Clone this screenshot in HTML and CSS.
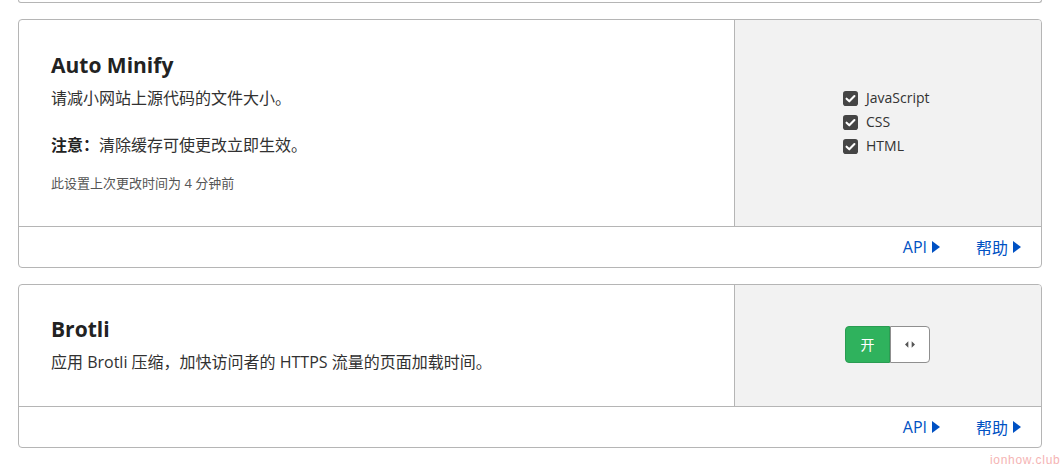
FILE: index.html
```html
<!DOCTYPE html>
<html lang="zh">
<head>
<meta charset="utf-8">
<link rel="stylesheet" href="styles.css">
</head>
<body>
<div class="page">
  <div class="card-tail"></div>

  <section class="card">
    <div class="card-main">
      <div class="card-text">
        <h2 class="title">Auto Minify</h2>
        <p class="desc">请减小网站上源代码的文件大小。</p>
        <p class="desc note"><strong>注意：</strong>清除缓存可使更改立即生效。</p>
        <p class="meta">此设置上次更改时间为 4 分钟前</p>
      </div>
      <div class="card-control">
        <ul class="checks">
          <li><svg class="cb" viewBox="0 0 16 16"><rect x="0" y="0" width="16" height="16" rx="3" fill="#454545"/><path d="M3.8 8.2 L6.7 11 L12.2 5.3" fill="none" stroke="#fff" stroke-width="2.2" stroke-linecap="round" stroke-linejoin="round"/></svg>JavaScript</li>
          <li><svg class="cb" viewBox="0 0 16 16"><rect x="0" y="0" width="16" height="16" rx="3" fill="#454545"/><path d="M3.8 8.2 L6.7 11 L12.2 5.3" fill="none" stroke="#fff" stroke-width="2.2" stroke-linecap="round" stroke-linejoin="round"/></svg>CSS</li>
          <li><svg class="cb" viewBox="0 0 16 16"><rect x="0" y="0" width="16" height="16" rx="3" fill="#454545"/><path d="M3.8 8.2 L6.7 11 L12.2 5.3" fill="none" stroke="#fff" stroke-width="2.2" stroke-linecap="round" stroke-linejoin="round"/></svg>HTML</li>
        </ul>
      </div>
    </div>
    <div class="card-foot">
      <a class="link" href="#">API<svg class="tri" viewBox="0 0 8 12"><path d="M0 0 L8 6 L0 12 Z" fill="#0051c3"/></svg></a>
      <a class="link" href="#">帮助<svg class="tri" viewBox="0 0 8 12"><path d="M0 0 L8 6 L0 12 Z" fill="#0051c3"/></svg></a>
    </div>
  </section>

  <section class="card">
    <div class="card-main">
      <div class="card-text two">
        <h2 class="title">Brotli</h2>
        <p class="desc">应用 Brotli 压缩，加快访问者的 HTTPS 流量的页面加载时间。</p>
      </div>
      <div class="card-control">
        <div class="toggle">
          <span class="toggle-on">开</span>
          <span class="toggle-knob"><svg viewBox="0 0 12 8"><path d="M0 4 L4 0 L4 8 Z M12 4 L8 0 L8 8 Z" fill="#555"/></svg></span>
        </div>
      </div>
    </div>
    <div class="card-foot">
      <a class="link" href="#">API<svg class="tri" viewBox="0 0 8 12"><path d="M0 0 L8 6 L0 12 Z" fill="#0051c3"/></svg></a>
      <a class="link" href="#">帮助<svg class="tri" viewBox="0 0 8 12"><path d="M0 0 L8 6 L0 12 Z" fill="#0051c3"/></svg></a>
    </div>
  </section>
</div>
<div class="watermark">ionhow.club</div>
</body>
</html>
```

FILE: styles.css
```css
* { box-sizing: border-box; }
html, body { margin: 0; padding: 0; background: #fff; }
body {
  font-family: "Open Sans", "Noto Sans CJK SC", sans-serif;
  color: #313131;
  width: 1064px;
  height: 473px;
  overflow: hidden;
  position: relative;
}
.page { padding: 0 22px 0 18px; }
.card-tail {
  height: 3px;
  border: 1px solid #b5b5b5;
  border-top: none;
  border-radius: 0 0 4px 4px;
}
.card {
  margin-top: 16px;
  border: 1px solid #b5b5b5;
  border-radius: 4px;
  overflow: hidden;
}
.card + .card { margin-top: 16px; }
.card-main { display: flex; }
.card-text {
  flex: 1;
  padding: 31px 32px 34px;
}
.card-text.two { padding: 30px 32px 32px; }
.title {
  margin: 0;
  font-size: 21px;
  line-height: 28px;
  font-weight: 700;
  color: #222;
}
.desc {
  margin: 7px 0 0;
  font-size: 16px;
  line-height: 24px;
}
.desc.note { margin-top: 23px; }
.desc strong { font-weight: 700; color: #222; }
.meta {
  margin: 17px 0 0;
  font-size: 13px;
  line-height: 18px;
  color: #555;
}
.card-control {
  width: 307px;
  background: #f2f2f2;
  border-left: 1px solid #b5b5b5;
  display: flex;
  align-items: center;
  padding-left: 108px;
}
.checks { list-style: none; margin: 0 0 2px; padding: 0; }
.checks li {
  display: flex;
  align-items: center;
  font-size: 14px;
  line-height: 24px;
  color: #333;
}
.cb { width: 15px; height: 15px; margin-right: 8px; }
.toggle {
  display: flex;
  width: 85px;
  height: 37px;
  margin-left: 2px;
  margin-top: -3px;
}
.toggle-on {
  width: 45px;
  background: #2fb25d;
  border: 1px solid #2a9c52;
  border-radius: 4px 0 0 4px;
  color: #fff;
  font-size: 14px;
  display: flex;
  align-items: center;
  justify-content: center;
}
.toggle-knob {
  flex: 1;
  background: #fff;
  border: 1px solid #8f8f8f;
  border-radius: 0 4px 4px 0;
  display: flex;
  align-items: center;
  justify-content: center;
}
.toggle-knob svg { width: 10px; height: 7px; }
.card-foot {
  border-top: 1px solid #b5b5b5;
  height: 41px;
  display: flex;
  justify-content: flex-end;
  align-items: center;
  gap: 36px;
  padding-right: 20px;
}
.link {
  color: #0051c3;
  text-decoration: none;
  font-size: 16px;
  display: flex;
  align-items: center;
}
.tri { width: 8px; height: 12px; margin-left: 5px; }
.watermark {
  position: absolute;
  left: 990px;
  top: 453px;
  font-family: "Liberation Sans", sans-serif;
  font-size: 12px;
  letter-spacing: 0.7px;
  color: #f5b4b4;
}
```
